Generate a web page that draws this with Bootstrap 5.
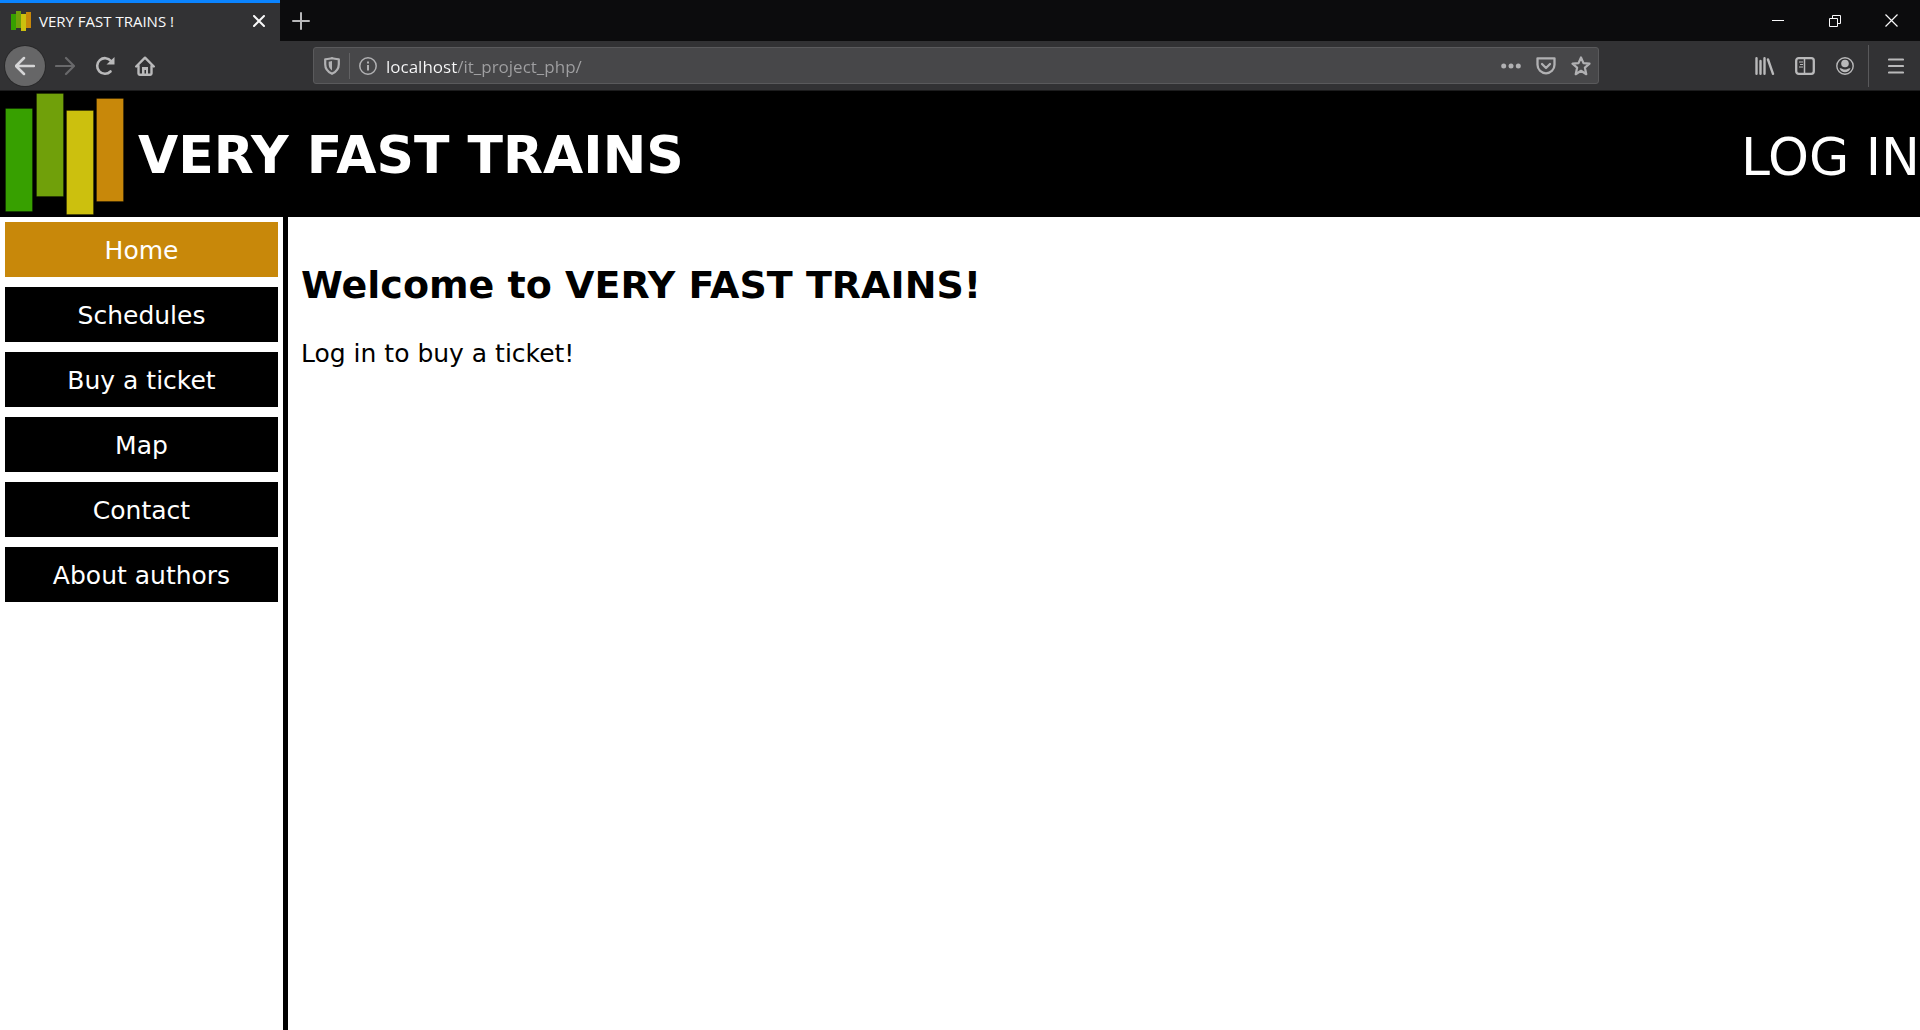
<!DOCTYPE html>
<html lang="en">
<head>
<meta charset="utf-8">
<meta name="viewport" content="width=device-width, initial-scale=1">
<title>VERY FAST TRAINS !</title>
<link rel="stylesheet" href="https://cdn.jsdelivr.net/npm/bootstrap@5.3.0/dist/css/bootstrap.min.css">
<style>
  body { font-family: Verdana, "DejaVu Sans", sans-serif; color: #000; }
  svg { display: block; flex: none; }
  .chrome { font-family: "Segoe UI", "Open Sans", sans-serif; color: #f9f9fa; background: #323234; }
  .chrome button { background: none; border: 0; padding: 0; color: #b9b9ba; display: flex; align-items: center; justify-content: center; flex: none; }
  .tabstrip { background: #0c0c0d; height: 41px; }
  .page-tab { width: 280px; background: #323234; border-top: 3px solid #0a84ff; font-size: 15px; line-height: 20px; padding: 0 11px 2px; }
  .chrome .tab-close { width: 20px; height: 20px; color: #f9f9fa; }
  .chrome .tab-new { width: 42px; }
  .chrome .win-btn { width: 57px; color: #f9f9fa; }
  .toolbar { height: 50px; padding: 0 4px 0 5px; border-bottom: 1px solid #1c1c1d; }
  .chrome .tool { width: 40px; height: 40px; }
  .chrome .tool-back { background: #666667; border-radius: 50%; box-shadow: 0 0 0 1px #29292a; color: #d5d5d6; }
  .chrome .tool-off { color: #69696b; }
  .urlbar { height: 37px; margin: 0 146px 0 148px; background: #474749; border: 1px solid #5a5a5c; border-radius: 3px; color: #b9b9ba; }
  .chrome .urlbar button { width: 35px; height: 35px; color: #b1b1b3; }
  .url-rule { width: 1px; height: 26px; background: #626264; }
  .url-text { border: 0; outline: 0; min-width: 0; padding: 2px 0 0 1px; font-size: 17px; line-height: 24px; color: transparent;
    background: linear-gradient(90deg, #f9f9fa 72px, #a0a0a2 72px); -webkit-background-clip: text; background-clip: text; }
  .tool-rule { width: 1px; height: 42px; background: #59595b; margin: 0 7px 0 3px; }
  .site-head { background: #000; height: 126px; padding-left: 5px; }
  .brand { color: #fff; font-size: 52px; font-weight: 700; line-height: 60px; gap: 14px; }
  .brand span { padding-top: 2px; }
  .login { color: #fff; font-size: 52px; line-height: 60px; padding-top: 5px; }
  .side { width: 288px; border-right: 5px solid #000; padding: 5px; gap: 10px; flex: none; }
  .side a { background: #000; color: #fff; font-size: 25px; line-height: 31px; padding: 13px 0 11px; text-align: center; text-decoration: none; }
  .side a.active, .side a:hover { background: #c8880a; }
  .content { padding: 44px 13px; }
  .content h1 { font-size: 38px; font-weight: 700; line-height: 48px; margin-bottom: 29px; }
  .content p { font-size: 25px; line-height: 32px; margin: 0; }
</style>
<script src="https://cdn.jsdelivr.net/npm/bootstrap@5.3.0/dist/js/bootstrap.bundle.min.js"></script>
</head>
<body class="d-flex flex-column min-vh-100 bg-white">
<div class="chrome">
  <div class="tabstrip d-flex">
    <div class="page-tab d-flex align-items-center">
      <svg width="20" height="20" viewBox="0 0 20 20"><path fill="#37a000" d="M0 3h5v16H0z"/><path fill="#70a00a" d="M5 0h5v17H5z"/><path fill="#ccc00e" d="M10 3h5v17h-5z"/><path fill="#c8880a" d="M15 1h5v16h-5z"/></svg>
      <span class="flex-fill ps-2">VERY FAST TRAINS !</span>
      <button class="tab-close" aria-label="Close tab"><svg width="12" height="12" viewBox="0 0 12 12" fill="none" stroke="currentColor" stroke-width="2" stroke-linecap="round"><path d="M1 1l10 10M11 1L1 11"/></svg></button>
    </div>
    <button class="tab-new" aria-label="New tab"><svg width="18" height="18" viewBox="0 0 18 18" fill="none" stroke="currentColor" stroke-width="2" stroke-linecap="round"><path d="M9 1v16M1 9h16"/></svg></button>
    <div class="d-flex ms-auto">
      <button class="win-btn" aria-label="Minimize"><svg width="12" height="12" viewBox="0 0 12 12" fill="currentColor"><path d="M0 5h12v1H0z"/></svg></button>
      <button class="win-btn" aria-label="Restore"><svg width="12" height="12" viewBox="0 0 12 12" fill="none" stroke="currentColor"><path d="M.5 3.500h8v8h-8zM3.500 3.500v-3h8v8h-3"/></svg></button>
      <button class="win-btn" aria-label="Close window"><svg width="13" height="13" viewBox="0 0 13 13" fill="none" stroke="currentColor" stroke-width="1.200"><path d="M.5.5l12 12M12.500.5l-12 12"/></svg></button>
    </div>
  </div>
  <div class="toolbar d-flex align-items-center">
    <button class="tool tool-back" aria-label="Back"><svg width="20" height="20" viewBox="0 0 20 20" fill="none" stroke="currentColor" stroke-width="2.500" stroke-linecap="round" stroke-linejoin="round"><path d="M19 10H2M9 2l-8 8 8 8"/></svg></button>
    <button class="tool tool-off" aria-label="Forward"><svg width="20" height="20" viewBox="0 0 20 20" fill="none" stroke="currentColor" stroke-width="2.200" stroke-linecap="round" stroke-linejoin="round"><path d="M1 10h17M11 2l8 8-8 8"/></svg></button>
    <button class="tool" aria-label="Reload"><svg width="20" height="20" viewBox="0 0 20 20"><path d="M15.500 15.500A7.800 7.800 0 1 1 16 5" fill="none" stroke="currentColor" stroke-width="2.600" stroke-linecap="round"/><path d="M19.500 1v7.500h-8z" fill="currentColor"/></svg></button>
    <button class="tool" aria-label="Home"><svg width="20" height="20" viewBox="0 0 20 20" fill="none" stroke="currentColor" stroke-width="2.400" stroke-linecap="round" stroke-linejoin="round"><path d="M1.200 10.500L10 1.700l8.800 8.800M3.500 10v7.500q0 1.200 1.200 1.200h10.600q1.200 0 1.200-1.200V10"/><path d="M7 18v-7h6v7h-2v-4H9.500v4z" fill="currentColor" stroke="none"/></svg></button>
    <div class="urlbar d-flex align-items-center flex-fill">
      <button aria-label="Tracking protection"><svg width="16" height="18" viewBox="0 0 16 18"><path d="M8 1.200c2.500.5 4.500 1 6.800 1.100v5C14.800 12 12 15 8 16.800 4 15 1.200 12 1.200 7.300v-5C3.500 2.200 5.500 1.700 8 1.200z" fill="none" stroke="currentColor" stroke-width="2.200" stroke-linejoin="round"/><path d="M8 4v9.500C6 12 4.700 10 4.700 7.500V4.700z" fill="currentColor"/></svg></button>
      <span class="url-rule"></span>
      <button aria-label="Site information"><svg width="18" height="18" viewBox="0 0 18 18"><circle cx="9" cy="9" r="8.200" fill="none" stroke="currentColor" stroke-width="1.500"/><path d="M8 8h2v5.500H8zM8 4.500h2v2H8z" fill="currentColor"/></svg></button>
      <input class="url-text flex-fill" type="text" aria-label="Address" value="localhost/it_project_php/">
      <button aria-label="Page actions"><svg width="20" height="6" viewBox="0 0 20 6" fill="currentColor"><circle cx="2.700" cy="3" r="2.500"/><circle cx="10" cy="3" r="2.500"/><circle cx="17.300" cy="3" r="2.500"/></svg></button>
      <button aria-label="Save to Pocket"><svg width="20" height="18" viewBox="0 0 20 18" fill="none" stroke="currentColor" stroke-width="2.300" stroke-linecap="round" stroke-linejoin="round"><path d="M1.500 1.300h17v6.500a8.500 8.500 0 0 1-17 0zM6 7l4 4 4-4"/></svg></button>
      <button aria-label="Bookmark"><svg width="20" height="20" viewBox="0 0 20 20" fill="none" stroke="currentColor" stroke-width="2.200" stroke-linejoin="round"><path d="M10 1.500l2.500 5.600 6 .6-4.600 4 1.400 6.500-5.300-3.400-5.300 3.400 1.400-6.500-4.600-4 6-.6z"/></svg></button>
    </div>
    <button class="tool" aria-label="Library"><svg width="20" height="18" viewBox="0 0 20 18" fill="none" stroke="currentColor" stroke-width="2.400" stroke-linecap="round"><path d="M1.500 1.200v15.600M5.500 4v12.800M9.500 1.200v15.600M13 2.500l5 14.300"/></svg></button>
    <button class="tool" aria-label="Sidebars"><svg width="20" height="18" viewBox="0 0 20 18" fill="none" stroke="currentColor"><rect x="1.200" y="1.200" width="17.600" height="15.600" rx="2.500" stroke-width="2.300"/><path d="M9.500 2v14" stroke-width="1.500"/><path d="M4 5h4M5 7.500h3M4 10h4" stroke-width="1.200"/></svg></button>
    <button class="tool" aria-label="Account"><svg width="18" height="18" viewBox="0 0 18 18"><circle cx="9" cy="9" r="8.200" fill="none" stroke="currentColor" stroke-width="1.400"/><circle cx="9" cy="6.500" r="3.800" fill="currentColor"/><path d="M3.500 11.300c1.500 0 2.500.2 3.200.7 1.400.8 3.200.8 4.600 0 .7-.5 1.700-.7 3.200-.7-1 2.700-3 4-5.500 4s-4.500-1.300-5.500-4z" fill="currentColor"/></svg></button>
    <span class="tool-rule"></span>
    <button class="tool" aria-label="Menu"><svg width="16" height="16" viewBox="0 0 16 16" fill="none" stroke="currentColor" stroke-width="2.200" stroke-linecap="round"><path d="M1 1.500h14M1 8h14M1 14.500h14"/></svg></button>
  </div>
</div>
<header class="site-head d-flex align-items-center justify-content-between">
  <div class="brand d-flex align-items-center">
    <svg width="119" height="122" viewBox="0 0 119 122" stroke-opacity=".25" stroke="#000"><path fill="#37a000" d="M.5 15.500h27v103H.5z"/><path fill="#70a00a" d="M31.500.5h27v103h-27z"/><path fill="#ccc00e" d="M61.500 17.500h27v104h-27z"/><path fill="#c8880a" d="M91.500 5.500h27v103h-27z"/></svg>
    <span>VERY FAST TRAINS</span>
  </div>
  <a class="login text-decoration-none" href="#login">LOG IN</a>
</header>
<div class="d-flex flex-fill">
  <nav class="side d-flex flex-column" aria-label="Main">
    <a class="active" href="#home">Home</a>
    <a href="#schedules">Schedules</a>
    <a href="#buy">Buy a ticket</a>
    <a href="#map">Map</a>
    <a href="#contact">Contact</a>
    <a href="#authors">About authors</a>
  </nav>
  <main class="content flex-fill">
    <h1>Welcome to VERY FAST TRAINS!</h1>
    <p>Log in to buy a ticket!</p>
  </main>
</div>
</body>
</html>
